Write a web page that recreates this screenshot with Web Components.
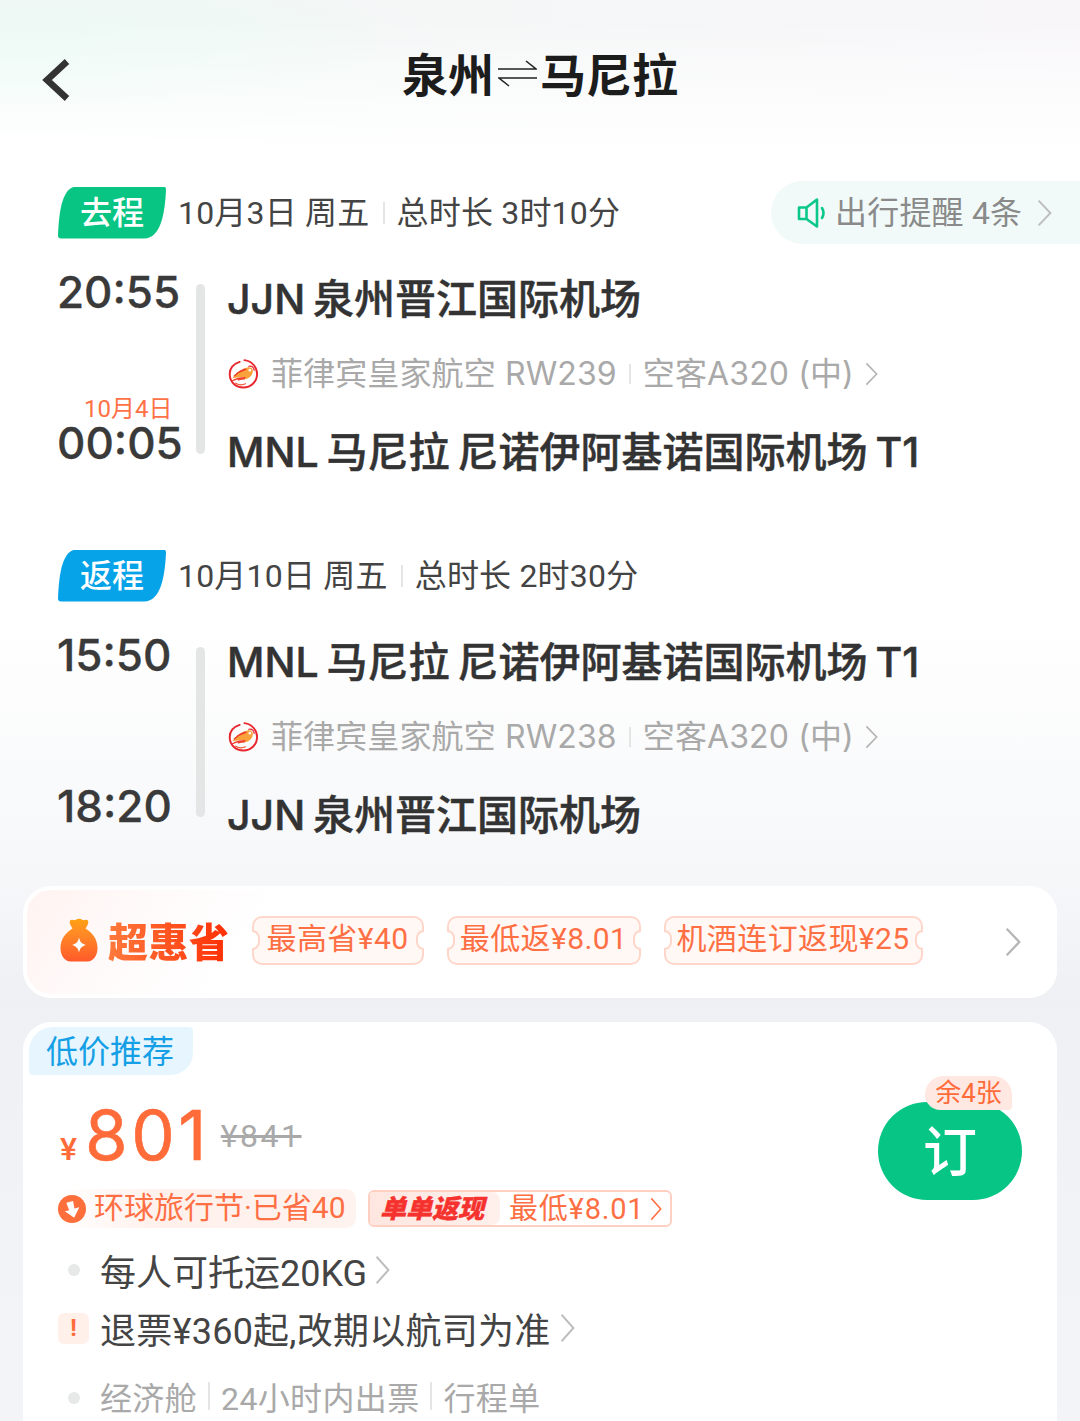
<!DOCTYPE html>
<html lang="zh">
<head>
<meta charset="utf-8">
<title>泉州⇌马尼拉</title>
<style>
  html, body { margin: 0; height: 1421px; overflow: hidden; }
  body {
    font-family: Roboto, "Noto Sans CJK SC", sans-serif;
    color: #444;
    background: linear-gradient(180deg, #fff 0, #fff 620px, #f6f7f9 880px, #eff0f4 1000px, #f1f2f6 1150px, #f3f4f7 1421px);
  }
</style>
</head>
<body>
<trip-nav>
  <span slot="from">泉州</span>
  <span slot="to">马尼拉</span>
</trip-nav>

<flight-segment kind="go" style="--after:34px">
  <span slot="tag">去程</span>
  <span slot="date">10月3日 周五</span>
  <span slot="total">总时长 3时10分</span>
  <notice-pill slot="notice">出行提醒 4条</notice-pill>
  <span slot="dep-time">20:55</span>
  <span slot="arr-date">10月4日</span>
  <span slot="arr-time">00:05</span>
  <span slot="dep">JJN 泉州晋江国际机场</span>
  <span slot="airline">菲律宾皇家航空 RW239</span>
  <span slot="plane">空客A320 (中)</span>
  <span slot="arr">MNL 马尼拉 尼诺伊阿基诺国际机场 T1</span>
</flight-segment>

<flight-segment kind="back" style="--after:13px">
  <span slot="tag">返程</span>
  <span slot="date">10月10日 周五</span>
  <span slot="total">总时长 2时30分</span>
  <span slot="dep-time">15:50</span>
  <span slot="arr-time">18:20</span>
  <span slot="dep">MNL 马尼拉 尼诺伊阿基诺国际机场 T1</span>
  <span slot="airline">菲律宾皇家航空 RW238</span>
  <span slot="plane">空客A320 (中)</span>
  <span slot="arr">JJN 泉州晋江国际机场</span>
</flight-segment>

<promo-card>
  <ticket-tag style="width:172px">最高省¥40</ticket-tag>
  <ticket-tag style="width:194px">最低返¥8.01</ticket-tag>
  <ticket-tag style="width:259px">机酒连订返现¥25</ticket-tag>
</promo-card>

<fare-card></fare-card>

<script>
const CHEVRON = (w, h, color, sw) => `<svg width="${w}" height="${h}" viewBox="0 0 14 26" fill="none" preserveAspectRatio="none" style="display:block;flex:none"><path d="M1.5 1.5 12.500 13 1.500 24.500" stroke="${color}" stroke-width="${sw}"/></svg>`;

const ROYAL_LOGO = `<svg width="31" height="32" viewBox="0 0 32 32" fill="none" style="display:block">
  <path d="M12 3.500C4.500 6 1.500 11.500 1.800 17c.4 7.500 6.500 13 14 13 7.800 0 14-6 14.200-13.500C30.200 9.500 25.500 3 17 1.700" stroke="#e8262e" stroke-width="2" stroke-linecap="round"/>
  <path d="M4.500 20.500c4.500-6.500 10.500-10 15.500-11.300 3-.7 5.500.7 5.700 3.300 0 4-2.500 7-6 8.500-2 .7-3.800.6-3.800.6 1.300-1 1.400-2 1-2.600-3.800 0-8.700.6-12.400 1.500Z" fill="#f9a13a"/>
  <path d="M4.500 23c4.500-2.500 9-3.300 13-3.300M6.500 18c3.300-3.300 7.500-5.500 12-6.800M10.500 22c2.300-.7 4.500-1 6.500-1M9 15.500c2.500-2 5.500-3.500 8.500-4.500" stroke="#ee3d2a" stroke-width="1.300" stroke-linecap="round"/>
  <path d="M21.500 8c3-.8 5.500 1.200 5.500 4.200" stroke="#e8262e" stroke-width="1.300" stroke-linecap="round"/>
  <circle cx="22.500" cy="12" r="1.300" fill="#fff"/>
  <path d="M8 25.500c2.500 1.600 7 2 10 .6" stroke="#f0562e" stroke-width="1.300" stroke-linecap="round"/>
</svg>`;

class TripNav extends HTMLElement {
  connectedCallback() {
    this.attachShadow({ mode: 'open' });
    this.shadowRoot.innerHTML = `
      <style>
        :host {
          display: flex;
          align-items: center;
          justify-content: center;
          box-sizing: border-box;
          position: relative;
          height: 150px;
          margin-bottom: 31px;
          padding-bottom: 6px;
          background:
            linear-gradient(180deg, rgba(255,255,255,0) 20px, rgba(255,255,255,.55) 85px, #fff 150px),
            radial-gradient(ellipse 480px 120px at 0 75px, #e9faf4, rgba(233,250,244,0)),
            linear-gradient(90deg, #f2f7f5, #f8f6f9);
        }
        .back { position: absolute; left: 42px; top: 59px; }
        .title {
          display: flex;
          align-items: center;
          font: 700 46px/60px "Noto Sans CJK SC", sans-serif;
          color: #1c1c1c;
        }
        svg.arrows { margin: 0 3px 0 4px; }
      </style>
      <svg class="back" width="28" height="42" viewBox="0 0 28 42" fill="none"><path d="M25 2.500 5 21l20 18.500" stroke="#333" stroke-width="6.500"/></svg>
      <div class="title">
        <slot name="from"></slot>
        <svg class="arrows" width="39" height="30" viewBox="0 0 39 30" fill="none"><path d="M0 12h38L28 4M39 21H1l10 8" stroke="#222" stroke-width="1.600"/></svg>
        <slot name="to"></slot>
      </div>
    `;
  }
}
customElements.define('trip-nav', TripNav);

class NoticePill extends HTMLElement {
  connectedCallback() {
    this.attachShadow({ mode: 'open' });
    this.shadowRoot.innerHTML = `
      <style>
        :host {
          display: flex;
          align-items: center;
          box-sizing: border-box;
          width: 309px;
          height: 63px;
          padding-left: 26px;
          background: #f1faf8;
          border-radius: 32px 0 0 32px;
          font-size: 32px;
          color: #8a8a8a;
        }
        .ic { margin-right: 9px; }
        .label { margin-bottom: 6px; }
        .ar { margin-left: 15px; }
      </style>
      <svg class="ic" width="29" height="32" viewBox="0 0 29 32" fill="none" stroke="#0bc78a" stroke-width="2.600" stroke-linejoin="round" stroke-linecap="round"><path d="M2 10.500h7.500V22H2zM9.500 10.500 20 2.500v27L9.500 22"/><path d="M25 11c1.800 3 1.800 7 0 10"/></svg>
      <span class="label"><slot></slot></span>
      <span class="ar">${CHEVRON(15, 28, '#bdbdbd', 1.8)}</span>
    `;
  }
}
customElements.define('notice-pill', NoticePill);

class FlightSegment extends HTMLElement {
  connectedCallback() {
    const back = this.getAttribute('kind') === 'back';
    this.attachShadow({ mode: 'open' });
    this.shadowRoot.innerHTML = `
      <style>
        :host { display: block; margin-bottom: var(--after, 0); }
        .top {
          display: flex;
          align-items: center;
          height: 63px;
          padding-left: 58px;
          font-size: 32px;
          letter-spacing: .2px;
          color: #444;
          white-space: nowrap;
        }
        .top ::slotted([slot="date"]), .top ::slotted([slot="total"]) { margin-bottom: 6px; }
        .tag {
          display: flex;
          align-items: center;
          justify-content: center;
          box-sizing: border-box;
          width: 108px;
          height: 52px;
          padding-bottom: 6px;
          margin-right: 12px;
          clip-path: path("M19 0H105Q108 0 108 3C107 26 103 52 86 52H3Q0 52 0 49C1 22 5 0 19 0Z");
          background: ${back ? '#06a3e8' : '#08c584'};
          font-weight: 500;
          letter-spacing: 0;
          color: #fff;
        }
        .sep { width: 2px; height: 22px; background: #e4e6e6; margin: 0 12px 0 13px; }
        .grow { flex: 1; }
        .body {
          display: grid;
          grid-template-columns: 138px 9px 1fr;
          padding-left: 58px;
        }
        .times {
          display: flex;
          flex-direction: column;
          margin-left: -1px;
          padding-top: 24px;
          font: 500 44px/48px Inter, sans-serif;
          -webkit-text-stroke: .3px #3a3a3a;
          color: #3a3a3a;
          white-space: nowrap;
        }
        .date {
          height: 22px;
          margin-top: 81px;
          padding-left: 27px;
          font: 400 24px/24px Roboto, "Noto Sans CJK SC", sans-serif;
          -webkit-text-stroke: 0;
          color: #ff7146;
        }
        .gap { height: 103px; }
        .bar {
          width: 9px;
          height: 170px;
          margin-top: 40px;
          background: #e4e6e6;
          border-radius: 5px;
        }
        .right { padding-left: 22px; white-space: nowrap; }
        .stop {
          height: 110px;
          font: 500 41px/110px Inter, "Noto Sans CJK SC", sans-serif;
          -webkit-text-stroke: .5px #333;
          word-spacing: -3px;
          color: #333;
        }
        .stop.end { height: 116px; line-height: 116px; }
        .air {
          display: flex;
          align-items: center;
          height: 40px;
          font: 400 32px/40px Inter, "Noto Sans CJK SC", sans-serif;
          letter-spacing: .12px;
          color: #a9a9a9;
        }
        .air svg:first-child { margin: 0 12px 0 1px; }
        .air .sep { height: 20px; margin: 0 12px; }
        .air .ar { margin-left: 10px; }
      </style>
      <div class="top">
        <div class="tag"><slot name="tag"></slot></div>
        <slot name="date"></slot>
        <div class="sep"></div>
        <slot name="total"></slot>
        <div class="grow"></div>
        <slot name="notice"></slot>
      </div>
      <div class="body">
        <div class="times">
          <slot name="dep-time"></slot>
          ${back ? '<div class="gap"></div>' : '<div class="date"><slot name="arr-date"></slot></div>'}
          <slot name="arr-time"></slot>
        </div>
        <div class="bar"></div>
        <div class="right">
          <div class="stop"><slot name="dep"></slot></div>
          <div class="air">
            ${ROYAL_LOGO}
            <slot name="airline"></slot>
            <div class="sep"></div>
            <slot name="plane"></slot>
            <span class="ar">${CHEVRON(13, 24, '#b5b5b5', 1.8)}</span>
          </div>
          <div class="stop end"><slot name="arr"></slot></div>
        </div>
      </div>
    `;
  }
}
customElements.define('flight-segment', FlightSegment);

class TicketTag extends HTMLElement {
  connectedCallback() {
    this.attachShadow({ mode: 'open' });
    this.shadowRoot.innerHTML = `
      <style>
        :host {
          display: flex;
          align-items: center;
          justify-content: center;
          box-sizing: border-box;
          position: relative;
          height: 49px;
          padding-bottom: 8px;
          background: #fff8f5;
          border: 2px solid #ffd6ca;
          border-radius: 10px;
          font-size: 30px;
          letter-spacing: .4px;
          color: #ff6f44;
          white-space: nowrap;
        }
        :host::before, :host::after {
          content: "";
          position: absolute;
          top: 12px;
          width: 6px;
          height: 16px;
          background: #fff;
          border: 2px solid #ffd6ca;
        }
        :host::before { left: -2px; border-left: 0; border-radius: 0 9px 9px 0; }
        :host::after { right: -2px; border-right: 0; border-radius: 9px 0 0 9px; }
      </style>
      <slot></slot>
    `;
  }
}
customElements.define('ticket-tag', TicketTag);

class PromoCard extends HTMLElement {
  connectedCallback() {
    this.attachShadow({ mode: 'open' });
    this.shadowRoot.innerHTML = `
      <style>
        :host {
          display: flex;
          align-items: center;
          box-sizing: border-box;
          width: 1034px;
          height: 112px;
          margin: 0 0 24px 23px;
          padding: 0 36px 4px 37px;
          border-radius: 28px;
          background: linear-gradient(125deg, #fff3f0 0, #fffafa 12%, #fff 24%);
          box-shadow: inset 0 0 0 4px #fff;
        }
        .logo { margin-right: 10px; flex: none; }
        .word {
          font: 900 40px/48px "Noto Sans CJK SC", sans-serif;
          letter-spacing: .5px;
          margin-right: 22px;
          background: linear-gradient(90deg, #ff7a3c, #ff2e05);
          -webkit-background-clip: text;
          background-clip: text;
          color: transparent;
          white-space: nowrap;
        }
        .tags { display: flex; gap: 23px; flex: 1; }
        .ar { margin-top: 4px; }
      </style>
      <svg class="logo" width="38" height="44" viewBox="0 0 38 44">
        <defs><linearGradient id="bag" x1=".5" y1="0" x2=".5" y2="1"><stop offset="0" stop-color="#ffa113"/><stop offset=".35" stop-color="#ff8a26"/><stop offset="1" stop-color="#ff5a2a"/></linearGradient></defs>
        <path d="M10 2.500c2-2 4 .2 5.500-.5 2.500-1.800 5-1.800 7 0 1.500.7 3.500-1.500 5.500.5 1 2.500-.5 5-2.500 8 6 3.500 12 10 12 19.500 0 8-4.500 13.500-10 13.500H10.500C5 43.500.5 38 .5 30c0-9.500 6-16 12-19.500C10.500 7.500 9 5 10 2.500Z" fill="url(#bag)"/>
        <path d="M19 19.500c1 4.500 2.500 6 7 7.500-4.500 1.500-6 3-7 7.500-1-4.500-2.500-6-7-7.500 4.500-1.500 6-3 7-7.500Z" fill="#fff"/>
      </svg>
      <div class="word">超惠省</div>
      <div class="tags"><slot></slot></div>
      <span class="ar">${CHEVRON(16, 30, '#b5b5b5', 2)}</span>
    `;
  }
}
customElements.define('promo-card', PromoCard);

class FareCard extends HTMLElement {
  connectedCallback() {
    this.attachShadow({ mode: 'open' });
    this.shadowRoot.innerHTML = `
      <style>
        :host {
          display: block;
          box-sizing: border-box;
          position: relative;
          width: 1034px;
          height: 440px;
          margin-left: 23px;
          padding: 5px 0 0 6px;
          background: #fff;
          border-radius: 28px 28px 0 0;
        }
        .label {
          display: flex;
          align-items: center;
          justify-content: center;
          box-sizing: border-box;
          width: 164px;
          height: 48px;
          padding: 0 2px 4px 0;
          background: #e7f6fe;
          border-radius: 24px 4px 22px 4px;
          font-size: 32px;
          color: #159fe6;
        }
        .price {
          display: flex;
          align-items: baseline;
          height: 76px;
          margin-top: 21px;
          padding-left: 31px;
          color: #ff6b39;
          white-space: nowrap;
        }
        .yen { font-size: 32px; font-weight: 500; margin-right: 8px; }
        .num { font: 400 69px/78px Inter, sans-serif; letter-spacing: 3.500px; -webkit-text-stroke: .6px #ff6b39; }
        .old {
          margin-left: 11px;
          font: 400 32px/36px Roboto, sans-serif;
          letter-spacing: 2.500px;
          color: #a9a9a9;
          text-decoration: line-through;
          position: relative;
          top: -13px;
        }
        .deals { display: flex; align-items: center; margin-top: 17px; padding-left: 29px; white-space: nowrap; }
        .festival {
          display: flex;
          align-items: center;
          box-sizing: border-box;
          width: 298px;
          height: 39px;
          border-radius: 10px;
          background: linear-gradient(90deg, #fff 0, #fff0eb 35%, #fff3ef 100%);
          font-size: 30px;
          color: #ff6f44;
        }
        .festival svg { margin-right: 8px; flex: none; }
        .festival span { margin-bottom: 7px; }
        .cash {
          display: flex;
          align-items: center;
          box-sizing: border-box;
          width: 304px;
          height: 37px;
          margin-left: 12px;
          border: 2px solid #ffd0c2;
          border-radius: 6px;
          font-size: 29px;
          letter-spacing: .8px;
          color: #ff6f44;
        }
        .cash span { margin-bottom: 6px; }
        .cash b {
          display: flex;
          align-items: center;
          box-sizing: border-box;
          width: 130px;
          height: 100%;
          padding: 0 0 3px 10px;
          margin-right: 9px;
          background: linear-gradient(90deg, #ffe6e0, #fff0ec);
          border-radius: 4px 8px 8px 4px;
          font: italic 900 26px/1 "Noto Sans CJK SC", sans-serif;
          -webkit-text-stroke: .4px #f5322e;
          letter-spacing: 0;
          color: #f5322e;
        }
        .cash svg { margin-left: 6px; }
        .line {
          display: flex;
          align-items: center;
          height: 58px;
          padding-left: 29px;
          font-size: 36px;
          color: #444;
          white-space: nowrap;
        }
        .line.first { margin-top: 13px; }
        .line.first svg { margin-left: 8px; }
        .line.refund { letter-spacing: .25px; }
        .mark { display: flex; justify-content: center; width: 31px; margin-right: 11px; }
        .dot { width: 12px; height: 12px; border-radius: 50%; background: #e7e9e9; }
        .warn {
          display: flex;
          align-items: center;
          justify-content: center;
          width: 31px;
          height: 31px;
          border-radius: 6px;
          background: #fff0ea;
          font: 700 24px/1 Roboto, sans-serif;
          color: #ff6b39;
        }
        .line svg { margin-left: 10px; }
        .line.meta { height: 78px; font-size: 32px; color: #a9a9a9; letter-spacing: .35px; }
        .line.meta .dot { position: relative; top: 2px; }
        .line.meta i { width: 2px; height: 28px; margin: 0 11px; background: #e4e6e6; }
        .book {
          position: absolute;
          left: 855px;
          top: 80px;
          display: flex;
          align-items: center;
          justify-content: center;
          box-sizing: border-box;
          width: 144px;
          height: 98px;
          padding-bottom: 4px;
          background: #07c584;
          border-radius: 49px;
          font: 500 54px/1 "Noto Sans CJK SC", sans-serif;
          color: #fff;
        }
        .left {
          position: absolute;
          left: 902px;
          top: 54px;
          display: flex;
          align-items: center;
          justify-content: center;
          width: 87px;
          height: 34px;
          padding-bottom: 5px;
          box-sizing: border-box;
          background: #ffe8e1;
          border-radius: 22px 22px 4px 18px;
          font-size: 26px;
          color: #ff6b39;
        }
      </style>
      <div class="label">低价推荐</div>
      <div class="price">
        <span class="yen">¥</span><span class="num">801</span><span class="old">¥841</span>
      </div>
      <div class="deals">
        <div class="festival">
          <svg width="28" height="28" viewBox="0 0 28 28"><circle cx="14" cy="14" r="14" fill="#ff6f3c"/><path d="M10 6.500h7l-.5 7.500h5L14 23 6.500 14.500h4.500z" fill="#fff" transform="rotate(-14 14 14)"/></svg>
          <span>环球旅行节·已省40</span>
        </div>
        <div class="cash">
          <b>单单返现</b><span>最低¥8.01</span>
          ${CHEVRON(12, 24, '#ff6f44', 1.8)}
        </div>
      </div>
      <div class="line first"><span class="mark"><span class="dot"></span></span>每人可托运20KG${CHEVRON(15, 30, '#bdbdbd', 1.8)}</div>
      <div class="line refund"><span class="mark"><span class="warn">!</span></span>退票¥360起,改期以航司为准${CHEVRON(15, 30, '#bdbdbd', 1.8)}</div>
      <div class="line meta"><span class="mark"><span class="dot"></span></span>经济舱<i></i>24小时内出票<i></i>行程单</div>
      <div class="book">订</div>
      <div class="left">余4张</div>
    `;
  }
}
customElements.define('fare-card', FareCard);
</script>
</body>
</html>
